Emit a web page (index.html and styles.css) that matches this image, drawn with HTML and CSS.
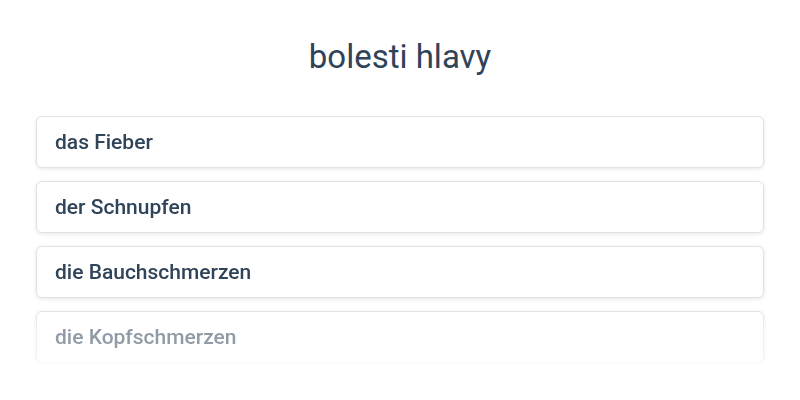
FILE: index.html
```html
<!DOCTYPE html>
<html lang="cs">
<head>
<meta charset="utf-8">
<link rel="stylesheet" href="styles.css">
</head>
<body>
<div class="page">
  <h1 class="title">bolesti hlavy</h1>
  <div class="list">
    <div class="card">das Fieber</div>
    <div class="card">der Schnupfen</div>
    <div class="card">die Bauchschmerzen</div>
    <div class="card">die Kopfschmerzen</div>
  </div>
</div>
</body>
</html>
```
FILE: styles.css
```css
html, body {
  margin: 0;
  padding: 0;
  background: #ffffff;
}
body {
  font-family: Roboto, "Noto Sans", sans-serif;
  color: #2f4359;
}
.page {
  padding: 0 36px;
}
.title {
  margin: 0;
  padding-top: 36px;
  height: 80px;
  box-sizing: border-box;
  text-align: center;
  font-size: 33px;
  font-weight: 400;
  line-height: 42px;
}
.list {
  margin-top: 36px;
  display: flex;
  flex-direction: column;
  gap: 13px;
  height: 250px;
  overflow: hidden;
  padding: 0 3px;
  margin-left: -3px;
  margin-right: -3px;
  -webkit-mask-image: linear-gradient(to bottom, #000 0, #000 195px, rgba(0,0,0,0.55) 212px, rgba(0,0,0,0.5) 240px, rgba(0,0,0,0) 250px);
  mask-image: linear-gradient(to bottom, #000 0, #000 195px, rgba(0,0,0,0.55) 212px, rgba(0,0,0,0.5) 240px, rgba(0,0,0,0) 250px);
}
.card {
  flex: none;
  height: 52px;
  box-sizing: border-box;
  padding: 0 18px;
  display: flex;
  align-items: center;
  border: 1px solid #e2e2e2;
  border-radius: 6px;
  box-shadow: 0 1px 4px rgba(0,0,0,0.1);
  font-size: 21px;
  font-weight: 500;
  background: #fff;
}
```
